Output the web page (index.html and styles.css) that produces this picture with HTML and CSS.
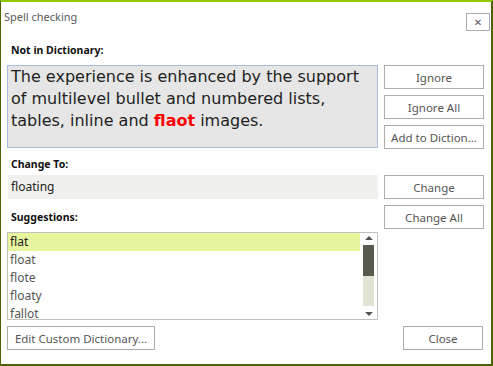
FILE: index.html
```html
<!DOCTYPE html>
<html lang="en">
<head>
  <meta charset="UTF-8"/>
  <title>Spell checking</title>
  <link rel="stylesheet" href="styles.css">
</head>
<body>
  <div class="dialog">
    <div class="title-bar">
      <span class="title">Spell checking</span>
      <button class="close-x" type="button">&#x2715;</button>
    </div>
    <div class="main">
      <div class="left-col">
        <div class="field-label first">Not in Dictionary:</div>
        <div class="sentence-box">The experience is enhanced by the support of multilevel bullet and numbered lists, tables, inline and <span class="misspelled">flaot</span> images.</div>
        <div class="field-label">Change To:</div>
        <div class="change-input">floating</div>
        <div class="field-label">Suggestions:</div>
        <div class="suggest-list">
          <ul class="items">
            <li class="selected">flat</li>
            <li>float</li>
            <li>flote</li>
            <li>floaty</li>
            <li>fallot</li>
          </ul>
          <div class="scrollbar">
            <div class="arrow up"></div>
            <div class="track"><div class="thumb"></div></div>
            <div class="arrow down"></div>
          </div>
        </div>
      </div>
      <div class="right-col">
        <button class="btn" type="button">Ignore</button>
        <button class="btn" type="button">Ignore All</button>
        <button class="btn" type="button">Add to Diction...</button>
        <button class="btn gap" type="button">Change</button>
        <button class="btn" type="button">Change All</button>
      </div>
    </div>
    <div class="footer">
      <button class="btn btn-edit" type="button">Edit Custom Dictionary...</button>
      <button class="btn btn-close" type="button">Close</button>
    </div>
  </div>
</body>
</html>
```

FILE: styles.css
```css
html, body { margin: 0; padding: 0; background: #fff; }
body { font-family: "Noto Sans", "Open Sans", Arial, sans-serif; font-size: 11px; color: #333; }
.dialog {
  width: 493px; height: 366px; box-sizing: border-box; background: #fff;
  border-top: 2px solid #92c700; border-left: 1px solid #4f6200;
  border-right: 2px solid #4f6200; border-bottom: 2px solid #4f6200;
  padding: 0 7px 0 6px;
}
.title-bar { display: flex; justify-content: space-between; align-items: flex-start; height: 40px; }
.title { margin: 7px 0 0 -3px; font-size: 11px; color: #5a5a5a; }
.close-x {
  margin: 11px -6px 0 0; width: 24px; height: 18px; padding: 0; background: #fff;
  border: 1px solid #adadad; color: #555; font-size: 10px; line-height: 15px; font-family: "DejaVu Sans", sans-serif;
}
.main { display: flex; gap: 6px; }
.left-col { width: 371px; display: flex; flex-direction: column; }
.right-col { width: 100px; display: flex; flex-direction: column; gap: 6px; padding-top: 23px; }
.field-label { font-weight: bold; font-size: 10.5px; color: #111; height: 16px; line-height: 16px; margin: 0 0 3px 4px; }
.field-label.first { margin-bottom: 7px; }
.sentence-box {
  height: 81px; margin-bottom: 8px; background: #e6e6e6; border: 1px solid #a7bedb;
  padding: 0 12px 0 3px; font-family: "DejaVu Sans", Verdana, sans-serif; font-size: 16px; line-height: 22px; color: #1e1e1e;
}
.misspelled { color: #ff0000; font-weight: bold; }
.change-input {
  height: 24px; margin: 0 0 10px 1px; background: #f0f1ef; padding-left: 3px;
  line-height: 24px; font-size: 12px; color: #222;
}
.field-label + .suggest-list { margin-top: 4px; }
.suggest-list { display: flex; height: 86px; border: 1px solid #c2c2ba; margin-bottom: 6px; }
.items { list-style: none; margin: 0; padding: 0; flex: 1; overflow: hidden; }
.items li { height: 18px; line-height: 18px; padding-left: 2px; font-size: 12px; color: #555; }
.items li.selected { background: #e6f59e; color: #222; }
.scrollbar { width: 11px; margin: 0 3px 0 3px; display: flex; flex-direction: column; align-items: center; }
.arrow { width: 0; height: 0; border-left: 4px solid transparent; border-right: 4px solid transparent; }
.arrow.up { margin: 3px 0 5px; border-bottom: 4px solid #555; }
.arrow.down { margin: 6px 0 0; border-top: 4px solid #555; }
.track { width: 11px; height: 61px; background: #e1e3d4; }
.thumb { height: 31px; background: #59594f; }
.btn {
  height: 24px; box-sizing: border-box; background: #fff; border: 1px solid #adadad;
  font-family: inherit; font-size: 11.5px; color: #555; padding: 0; cursor: pointer;
}
.btn.gap { margin-top: 20px; }
.footer { display: flex; justify-content: space-between; padding-right: 1px; }
.btn-edit { width: 148px; }
.btn-close { width: 80px; }
```
